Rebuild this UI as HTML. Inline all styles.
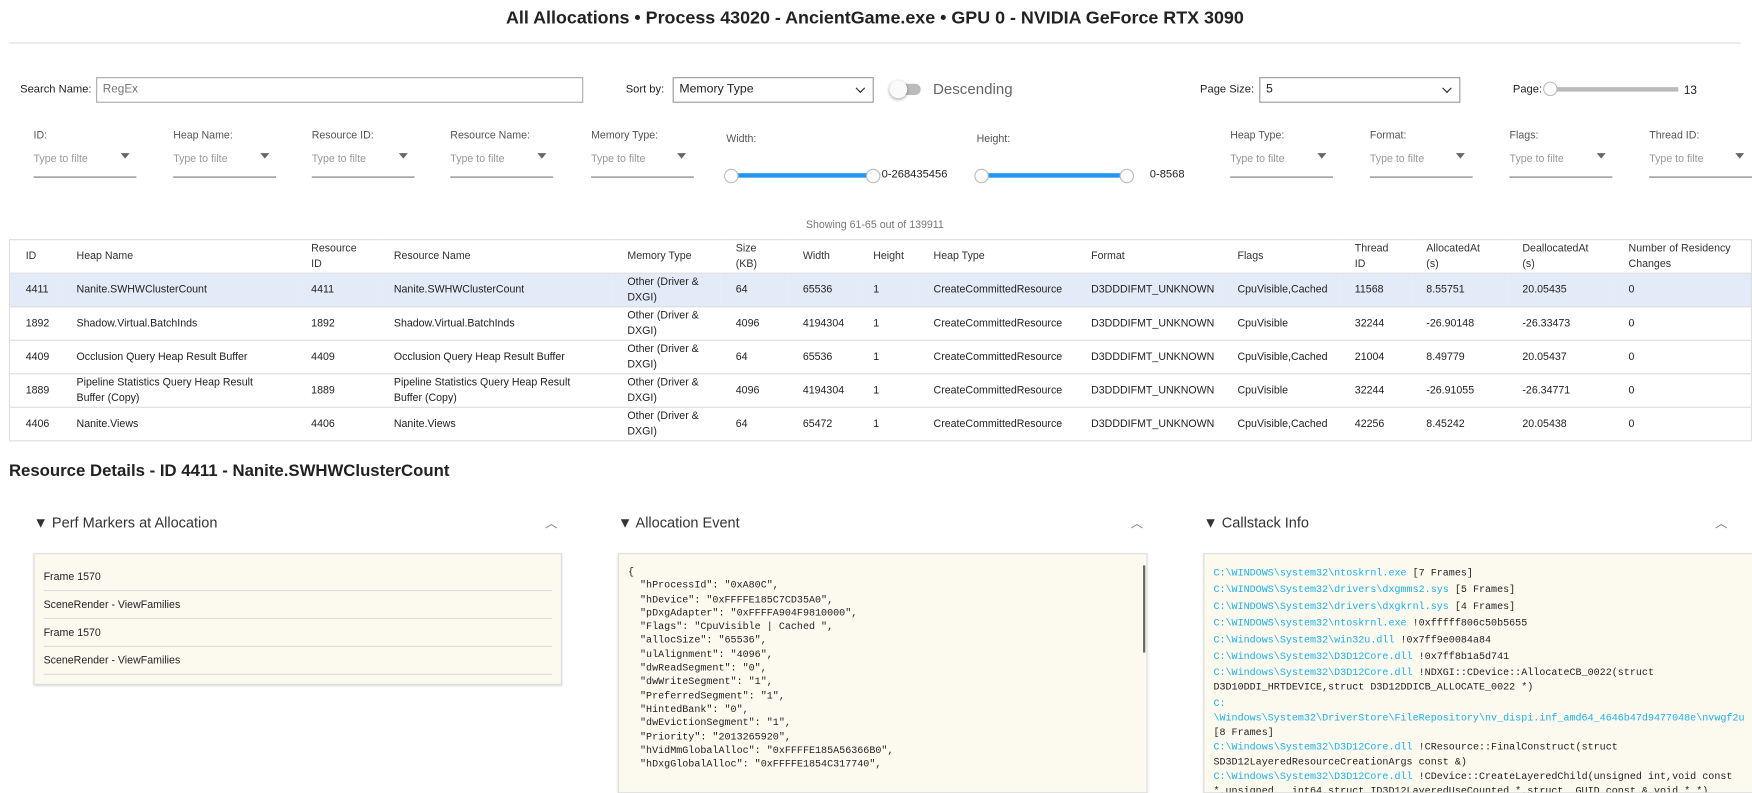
<!DOCTYPE html>
<html><head><meta charset="utf-8"><style>
*{box-sizing:border-box;margin:0;padding:0}
html,body{width:1752px;height:788px;overflow:hidden;background:#fff}
#w{position:absolute;left:0;top:0;width:1568px;height:705px;transform:scale(1.11735);transform-origin:0 0;font-family:"Liberation Sans",sans-serif;color:#222}
.a{position:absolute;white-space:nowrap}
.lbl{font-size:9.5px;color:#555}
.ph{font-size:9.5px;color:#999}
.ul{position:absolute;height:1px;background:#777;width:92px}
.tri{position:absolute;width:0;height:0;border-left:4px solid transparent;border-right:4px solid transparent;border-top:5px solid #666}
.sel{position:absolute;border:1px solid #999;height:23px;font-size:11px;padding:4px 5px;background:#fff}
.sel:after{content:"";position:absolute;right:8px;top:6px;width:5px;height:5px;border-right:1.5px solid #222;border-bottom:1.5px solid #222;transform:rotate(45deg)}
.track{position:absolute;height:4px;background:#2196f3}
.knob{position:absolute;width:13px;height:13px;border-radius:50%;background:#fff;border:1px solid #bbb}
table{position:absolute;left:8px;top:214px;width:1560px;border-collapse:collapse;font-size:9.5px;border:1px solid #ddd}
td,th{text-align:left;font-weight:normal;padding:0 0 0 14px;height:30px;border-bottom:1px solid #ddd;line-height:14px;vertical-align:middle}
th{color:#333}
tr.s td{background:#e3ebf8}
.hd{font-size:13px;color:#333}
.car{font-size:11px;color:#777}
.box{position:absolute;background:#fcf9ef;border:1px solid #ddd;box-shadow:0 1px 2px rgba(0,0,0,.15)}
.pm{position:absolute;left:8px;width:455px;font-size:9.5px;height:25px;line-height:25px;border-bottom:1px solid #ddd}
pre{font-family:"Liberation Mono",monospace;font-size:9px;line-height:12.3px;color:#222}
.cs{font-family:"Liberation Mono",monospace;font-size:9px;line-height:15px;color:#222}
.cs b{font-weight:normal;color:#1ab1f0}
</style></head><body><div id="w">
<div class="a" style="left:0;width:1566px;top:8px;text-align:center;font-size:16px;font-weight:bold">All Allocations • Process 43020 - AncientGame.exe • GPU 0 - NVIDIA GeForce RTX 3090</div>
<div class="a" style="left:8px;top:38px;width:1550px;height:1px;background:#ddd"></div>

<div class="a" style="left:18px;top:75px;font-size:10px">Search Name:</div>
<div class="a" style="left:86px;top:69px;width:436px;height:23px;border:1px solid #aaa;font-size:10.5px;color:#777;padding:4px 5px">RegEx</div>
<div class="a" style="left:560px;top:75px;font-size:10px">Sort by:</div>
<div class="sel" style="left:602px;top:69px;width:180px">Memory Type</div>
<div class="a" style="left:800px;top:75px;width:24px;height:10px;border-radius:5px;background:#bbb"></div>
<div class="a" style="left:796px;top:72px;width:16px;height:16px;border-radius:50%;background:#fafafa;box-shadow:0 1px 3px rgba(0,0,0,.4)"></div>
<div class="a" style="left:835px;top:72px;font-size:13.5px;color:#666">Descending</div>
<div class="a" style="left:1074px;top:75px;font-size:10px">Page Size:</div>
<div class="sel" style="left:1127px;top:69px;width:180px">5</div>
<div class="a" style="left:1354px;top:75px;font-size:10px">Page:</div>
<div class="a" style="left:1385px;top:78px;width:117px;height:4px;background:#bbb"></div>
<div class="knob" style="left:1381px;top:73px"></div>
<div class="a" style="left:1507px;top:75px;font-size:10.5px">13</div>

<div class="a lbl" style="left:30px;top:116px">ID:</div><div class="a ph" style="left:30px;top:137px">Type to filte</div><div class="tri" style="left:108px;top:137px"></div><div class="ul" style="left:30px;top:158px"></div>
<div class="a lbl" style="left:155px;top:116px">Heap Name:</div><div class="a ph" style="left:155px;top:137px">Type to filte</div><div class="tri" style="left:233px;top:137px"></div><div class="ul" style="left:155px;top:158px"></div>
<div class="a lbl" style="left:279px;top:116px">Resource ID:</div><div class="a ph" style="left:279px;top:137px">Type to filte</div><div class="tri" style="left:357px;top:137px"></div><div class="ul" style="left:279px;top:158px"></div>
<div class="a lbl" style="left:403px;top:116px">Resource Name:</div><div class="a ph" style="left:403px;top:137px">Type to filte</div><div class="tri" style="left:481px;top:137px"></div><div class="ul" style="left:403px;top:158px"></div>
<div class="a lbl" style="left:529px;top:116px">Memory Type:</div><div class="a ph" style="left:529px;top:137px">Type to filte</div><div class="tri" style="left:606px;top:137px"></div><div class="ul" style="left:529px;top:158px"></div>
<div class="a lbl" style="left:650px;top:119px">Width:</div>
<div class="track" style="left:658px;top:155px;width:122px"></div><div class="knob" style="left:648px;top:151px"></div><div class="knob" style="left:775px;top:151px"></div>
<div class="a" style="left:789px;top:151px;font-size:10px">0-268435456</div>
<div class="a lbl" style="left:874px;top:119px">Height:</div>
<div class="track" style="left:882px;top:155px;width:124px"></div><div class="knob" style="left:872px;top:151px"></div><div class="knob" style="left:1002px;top:151px"></div>
<div class="a" style="left:1029px;top:151px;font-size:10px">0-8568</div>
<div class="a lbl" style="left:1101px;top:116px">Heap Type:</div><div class="a ph" style="left:1101px;top:137px">Type to filte</div><div class="tri" style="left:1179px;top:137px"></div><div class="ul" style="left:1101px;top:158px"></div>
<div class="a lbl" style="left:1226px;top:116px">Format:</div><div class="a ph" style="left:1226px;top:137px">Type to filte</div><div class="tri" style="left:1303px;top:137px"></div><div class="ul" style="left:1226px;top:158px"></div>
<div class="a lbl" style="left:1351px;top:116px">Flags:</div><div class="a ph" style="left:1351px;top:137px">Type to filte</div><div class="tri" style="left:1429px;top:137px"></div><div class="ul" style="left:1351px;top:158px"></div>
<div class="a lbl" style="left:1476px;top:116px">Thread ID:</div><div class="a ph" style="left:1476px;top:137px">Type to filte</div><div class="tri" style="left:1553px;top:137px"></div><div class="ul" style="left:1476px;top:158px"></div>

<div class="a" style="left:0;width:1566px;text-align:center;top:196px;font-size:9.5px;color:#777">Showing 61-65 out of 139911</div>

<table>
<colgroup><col style="width:46px"><col style="width:210px"><col style="width:74px"><col style="width:209px"><col style="width:97px"><col style="width:60px"><col style="width:63px"><col style="width:54px"><col style="width:141px"><col style="width:131px"><col style="width:105px"><col style="width:64px"><col style="width:86px"><col style="width:95px"><col></colgroup>
<tr><th>ID</th><th>Heap Name</th><th>Resource<br>ID</th><th>Resource Name</th><th>Memory Type</th><th>Size<br>(KB)</th><th>Width</th><th>Height</th><th>Heap Type</th><th>Format</th><th>Flags</th><th>Thread<br>ID</th><th>AllocatedAt<br>(s)</th><th>DeallocatedAt<br>(s)</th><th>Number of Residency<br>Changes</th></tr>
<tr class="s"><td>4411</td><td>Nanite.SWHWClusterCount</td><td>4411</td><td>Nanite.SWHWClusterCount</td><td>Other (Driver &amp;<br>DXGI)</td><td>64</td><td>65536</td><td>1</td><td>CreateCommittedResource</td><td>D3DDDIFMT_UNKNOWN</td><td>CpuVisible,Cached</td><td>11568</td><td>8.55751</td><td>20.05435</td><td>0</td></tr>
<tr><td>1892</td><td>Shadow.Virtual.BatchInds</td><td>1892</td><td>Shadow.Virtual.BatchInds</td><td>Other (Driver &amp;<br>DXGI)</td><td>4096</td><td>4194304</td><td>1</td><td>CreateCommittedResource</td><td>D3DDDIFMT_UNKNOWN</td><td>CpuVisible</td><td>32244</td><td>-26.90148</td><td>-26.33473</td><td>0</td></tr>
<tr><td>4409</td><td>Occlusion Query Heap Result Buffer</td><td>4409</td><td>Occlusion Query Heap Result Buffer</td><td>Other (Driver &amp;<br>DXGI)</td><td>64</td><td>65536</td><td>1</td><td>CreateCommittedResource</td><td>D3DDDIFMT_UNKNOWN</td><td>CpuVisible,Cached</td><td>21004</td><td>8.49779</td><td>20.05437</td><td>0</td></tr>
<tr><td>1889</td><td>Pipeline Statistics Query Heap Result<br>Buffer (Copy)</td><td>1889</td><td>Pipeline Statistics Query Heap Result<br>Buffer (Copy)</td><td>Other (Driver &amp;<br>DXGI)</td><td>4096</td><td>4194304</td><td>1</td><td>CreateCommittedResource</td><td>D3DDDIFMT_UNKNOWN</td><td>CpuVisible</td><td>32244</td><td>-26.91055</td><td>-26.34771</td><td>0</td></tr>
<tr><td>4406</td><td>Nanite.Views</td><td>4406</td><td>Nanite.Views</td><td>Other (Driver &amp;<br>DXGI)</td><td>64</td><td>65472</td><td>1</td><td>CreateCommittedResource</td><td>D3DDDIFMT_UNKNOWN</td><td>CpuVisible,Cached</td><td>42256</td><td>8.45242</td><td>20.05438</td><td>0</td></tr>
</table>

<div class="a" style="left:8px;top:413px;font-size:15px;font-weight:bold">Resource Details - ID 4411 - Nanite.SWHWClusterCount</div>

<div class="a hd" style="left:30px;top:460px">▼ Perf Markers at Allocation</div><div class="a car" style="left:488px;top:460px">︿</div>
<div class="a hd" style="left:553px;top:460px">▼ Allocation Event</div><div class="a car" style="left:1012px;top:460px">︿</div>
<div class="a hd" style="left:1077px;top:460px">▼ Callstack Info</div><div class="a car" style="left:1535px;top:460px">︿</div>

<div class="box" style="left:30px;top:495px;width:473px;height:118px">
<div class="pm" style="top:8px">Frame 1570</div>
<div class="pm" style="top:33px">SceneRender - ViewFamilies</div>
<div class="pm" style="top:58px">Frame 1570</div>
<div class="pm" style="top:83px">SceneRender - ViewFamilies</div>
</div>

<div class="box" style="left:553px;top:495px;width:474px;height:215px;padding:10px 8px;overflow:hidden">
<div class="a" style="left:469px;top:10px;width:2px;height:78px;background:#666"></div>
<pre>{
  "hProcessId": "0xA80C",
  "hDevice": "0xFFFFE185C7CD35A0",
  "pDxgAdapter": "0xFFFFA904F9810000",
  "Flags": "CpuVisible | Cached ",
  "allocSize": "65536",
  "ulAlignment": "4096",
  "dwReadSegment": "0",
  "dwWriteSegment": "1",
  "PreferredSegment": "1",
  "HintedBank": "0",
  "dwEvictionSegment": "1",
  "Priority": "2013265920",
  "hVidMmGlobalAlloc": "0xFFFFE185A56366B0",
  "hDxgGlobalAlloc": "0xFFFFE1854C317740",</pre>
</div>

<div class="box" style="left:1077px;top:495px;width:491px;height:215px;padding:10px 8px;overflow:hidden;border-right:none">
<div class="cs" style="white-space:nowrap">
<div><b>C:\WINDOWS\system32\ntoskrnl.exe</b> [7 Frames]</div>
<div><b>C:\WINDOWS\System32\drivers\dxgmms2.sys</b> [5 Frames]</div>
<div><b>C:\WINDOWS\System32\drivers\dxgkrnl.sys</b> [4 Frames]</div>
<div><b>C:\WINDOWS\system32\ntoskrnl.exe</b> !0xfffff806c50b5655</div>
<div><b>C:\Windows\System32\win32u.dll</b> !0x7ff9e0084a84</div>
<div><b>C:\Windows\System32\D3D12Core.dll</b> !0x7ff8b1a5d741</div>
<div style="line-height:13px"><b>C:\Windows\System32\D3D12Core.dll</b> !NDXGI::CDevice::AllocateCB_0022(struct<br>D3D10DDI_HRTDEVICE,struct D3D12DDICB_ALLOCATE_0022 *)</div>
<div style="line-height:13px;margin-top:2px"><b>C:<br>\Windows\System32\DriverStore\FileRepository\nv_dispi.inf_amd64_4646b47d9477048e\nvwgf2u</b><br>[8 Frames]</div>
<div style="line-height:13px"><b>C:\Windows\System32\D3D12Core.dll</b> !CResource::FinalConstruct(struct<br>SD3D12LayeredResourceCreationArgs const &amp;)</div>
<div style="line-height:13px"><b>C:\Windows\System32\D3D12Core.dll</b> !CDevice::CreateLayeredChild(unsigned int,void const<br>*,unsigned __int64,struct ID3D12LayeredUseCounted *,struct _GUID const &amp;,void * *)</div>
</div>
</div>
</div></body></html>
